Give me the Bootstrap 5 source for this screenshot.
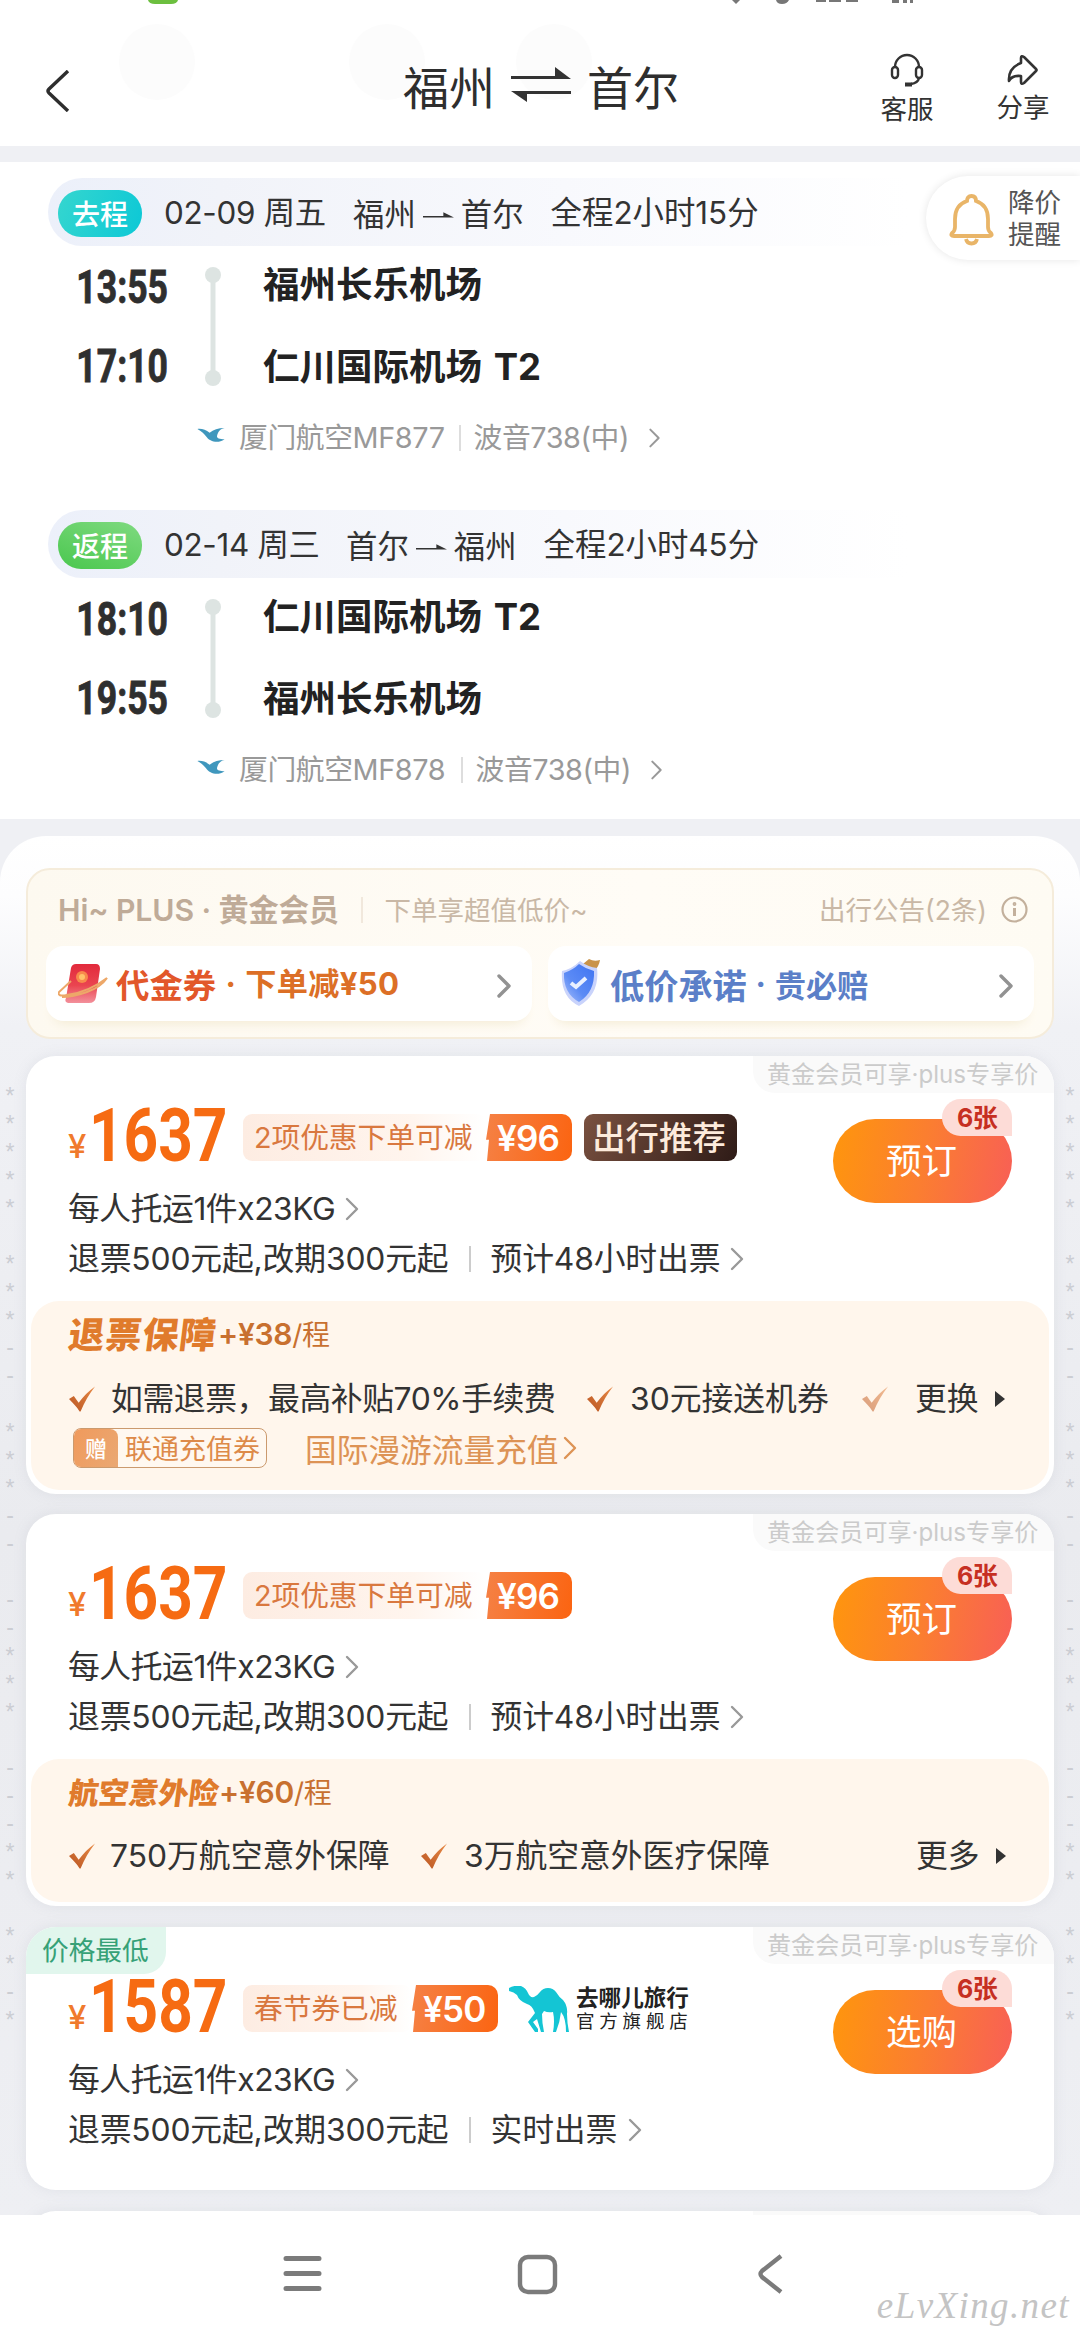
<!DOCTYPE html>
<html lang="zh-CN">
<head>
<meta charset="utf-8">
<meta name="viewport" content="width=device-width, initial-scale=1">
<title>福州 ⇌ 首尔</title>
<link href="https://cdn.jsdelivr.net/npm/bootstrap@5.3.0/dist/css/bootstrap.min.css" rel="stylesheet">
<style>
body{width:1080px;height:2339px;overflow:hidden;background:#eff0f4;font-family:Inter,"Noto Sans CJK SC",sans-serif;color:#333;font-size:32px;line-height:1;position:relative}
svg{display:block;flex:none}
span,div{white-space:nowrap}
.cn{font-family:"Noto Sans CJK SC",sans-serif}
.topbar{height:146px;padding:27px 30px 0 46px;position:relative;overflow:hidden}
.halo{position:absolute;top:24px;width:76px;height:76px;border-radius:50%;background:#fcfcfc}
.stat{position:absolute;top:0;left:0}
.ttl{font-size:46px;color:#2e2e2e;position:relative}
.tool{font-size:26.5px;line-height:30px;width:54px}
.trips{margin-top:16px;height:657px;padding:16px 0 0 48px}
.trip{height:331px}
.pillbar{width:860px;height:68px;border-radius:34px 0 0 34px;background:linear-gradient(90deg,#ecf0fa 0,#f1f3f9 20%,#f8f9fd 60%,#fff 100%);padding:2px 0 0 10px;font-size:31.4px;line-height:66px;color:#333}
.dirtag{width:84px;height:47px;border-radius:23px;color:#fff;font-size:28px;font-weight:500;line-height:46px;text-align:center;margin-right:22px}
.go{background:linear-gradient(110deg,#35d6cf,#0cc8d6)}
.back{background:linear-gradient(20deg,#4ac74e,#7fda80)}
.d1{width:189px;letter-spacing:-.3px}
.leg{height:137px;padding-top:21px}
.hm{width:120px;text-align:right;height:38px;line-height:40px;font-family:Roboto,sans-serif;font-weight:700;font-size:46.5px;transform:scaleX(.765);transform-origin:100% 50%;color:#2f2f2f;margin-bottom:41px;-webkit-text-stroke:.9px #2f2f2f}
.stn{font-size:36.5px;font-weight:700;line-height:37px;margin-bottom:45px;color:#222;margin-left:42px;word-spacing:3px}
.flt{font-size:28.8px;line-height:34px;color:#999;padding-left:149px;margin-top:38px;letter-spacing:-.4px}
.vr1{width:1.5px;background:#ddd;flex:none}
.bellp{position:absolute;right:0;top:176px;width:154px;height:84px;border-radius:42px 0 0 42px;background:#fff;box-shadow:0 0 8px rgba(0,0,0,.1);padding:0 0 0 23px;font-size:26.5px;line-height:32px;color:#555}
.panel{position:relative;margin-top:17px;height:1379px;border-radius:46px 46px 0 0;background:linear-gradient(180deg,#fff 0,#fdfdfe 60px,#f0f1f5 190px,#eaebef 700px,#eeeff3 100%);padding:32px 26px 0}
.dots{position:absolute;left:0;top:0}
.plus{height:171px;border:2px solid #f5ecdb;border-radius:24px;background:linear-gradient(90deg,#fdf9f0,#fffcf6 60%,#fefbf3);position:relative;color:#c9b8a6;font-size:26.5px}
.hi{height:56px;padding:23px 24px 0 30px;line-height:34px}
.hi b{font-size:30.2px;font-weight:600;color:#bfab98;letter-spacing:-.1px}
.cp{height:75px;border-radius:18px;background:#fff;width:486px;box-shadow:0 10px 12px -8px #f3ead2;line-height:72px;padding-right:21px}
.ct1{font-size:33.4px;font-weight:700}
.ct2{font-size:31.2px;font-weight:700}
.red{color:#e2572a}.org{color:#dc6f26}.blu{color:#5b7fc8}
.yuan50{letter-spacing:.3px}
.fare{position:relative;background:#fff;border-radius:30px;margin-top:21px;overflow:hidden;padding:48px 5px 0;box-shadow:0 0 14px rgba(130,140,160,.12)}
.f1{height:438px;margin-top:17px}.f2{height:392px;margin-top:20px}.f3{height:263px}
.plustag{position:absolute;top:0;right:0;width:301px;height:37px;background:#fafafa;border-radius:0 0 0 22px;font-size:24.1px;line-height:37px;padding-left:14px;color:#cbcbcb}
.low{position:absolute;top:0;left:0;width:140px;height:47px;background:#e1f6ed;border-radius:0 0 22px 0;color:#36a177;font-size:26.7px;line-height:44px;padding-left:16px}
.price{height:66px;padding:1px 0 0 38px}
.amt{width:174px;height:47px;color:#f66b12;font-weight:700;position:relative}
.yen{font-size:33px;font-weight:500;line-height:30px;width:25px;font-family:Inter;color:#f07a2c;padding-top:17px;text-indent:-1px}
.num{font-family:Roboto,sans-serif;font-size:74px;font-weight:700;line-height:43px;transform:scaleX(.815);transform-origin:0 50%;margin-left:3px}
.promo{height:47px;line-height:48px;border-radius:9px;background:linear-gradient(90deg,#fdece2,#fff5ee 70%,#fff);font-size:28.8px;color:#d9783f;padding-left:11px;width:243px;letter-spacing:-.1px}
.off{position:relative;width:86px;height:47px;border-radius:0 10px 10px 0;background:linear-gradient(100deg,#f58145,#fb6411);clip-path:polygon(4px 0,100% 0,100% 100%,1px 100%,3px 55%,0 55%);color:#fff;font-weight:600;font-size:35px;line-height:49px;padding-left:11px;letter-spacing:-.8px}
.rec{width:153px;height:47px;margin-left:12px;border-radius:9px;background:linear-gradient(120deg,#7a5140,#2e1b17);color:#fdebdc;font-size:33.4px;font-weight:500;line-height:44px;text-align:center;text-indent:-3px}
.info{padding-left:37px;height:51px;line-height:51px;font-size:31.8px}
.info span{letter-spacing:-.15px}
.info.up{margin-top:13px;margin-bottom:-1px}
.info.up span{letter-spacing:-.45px}
.buy{position:absolute;right:42px;top:63px;width:179px;height:84px;border-radius:42px;background:linear-gradient(100deg,#ff960c,#fb7e30 50%,#f85f56);color:#fff;font-size:35.5px;line-height:86px;text-align:center;text-indent:-2px;border:0;padding:0}
.left6{position:absolute;right:42px;top:43px;width:70px;height:37px;border-radius:19px 19px 0 19px;background:#fddcd7;color:#c62f22;font-weight:700;font-size:25px;line-height:38px;padding-left:15px;letter-spacing:-.5px}
.ins{border-radius:28px;background:#fff6ec;margin-top:17px;padding:9px 0 0 38px;position:relative}
.i1{height:189px}.i2{height:143px}
.it{height:49px;line-height:48px;color:#c8702f;font-weight:600;font-size:30px;letter-spacing:-.3px}
.it em{font-family:"Noto Sans CJK SC";font-weight:900;font-size:36px;line-height:44px;height:49px;color:#e07b2c;letter-spacing:1px;width:149px;transform:skewX(-7deg);font-style:normal}
.i2 .it em{font-size:30px;width:150px;letter-spacing:0;line-height:47px}
.it i{font-style:normal;font-weight:400;font-size:28px}
.perk{height:50px;line-height:50px;margin-top:15px;font-size:31.8px}
.perk .wide{letter-spacing:-.4px}
.i2 .perk{margin-top:14px}
.gift{height:40px;margin-top:4px;padding-left:4px;line-height:38px}
.gb{width:194px;height:40px;border:1.5px solid #cb9a6e;border-radius:8px;overflow:hidden;font-size:27px;line-height:37px;color:#dd8a49;background:#fff8f0}
.gb span:first-child{width:44px;background:linear-gradient(120deg,#f09a5c,#eaa873);color:#fff;font-size:22px;text-align:center;margin-right:7px;font-weight:500;border-radius:0 8px 0 0}
.sys{position:absolute;left:0;top:2215px;width:1080px;height:124px;background:#fff}
.sig{position:absolute;right:10px;top:67px;font-family:"Liberation Serif",serif;font-style:italic;font-size:37px;color:#c4c4c4;letter-spacing:1.4px;line-height:48px}
</style>
</head>
<body>
<svg width="0" height="0" class="position-absolute">
 <defs>
  <symbol id="chev" viewBox="0 0 14 24"><path d="M2 2l10 10L2 22" fill="none" stroke="currentColor" stroke-width="2.4" stroke-linecap="round" stroke-linejoin="round"/></symbol>
  <symbol id="chevb" viewBox="0 0 14 24"><path d="M2 2l10 10L2 22" fill="none" stroke="currentColor" stroke-width="3.4" stroke-linecap="round" stroke-linejoin="round"/></symbol>
  <symbol id="arr" viewBox="0 0 32 10"><path d="M0 6.500h32L21 1v4H0z" fill="#333"/></symbol>
  <symbol id="bird" viewBox="0 0 30 16"><path d="M0 1c5-.5 9 1 13 4 4-3 9-5 16-5-5 1-7 4-8 8-1 3 3 4 8 4-6 4-11 3-15 1-5-2-4-6-14-12z" fill="#3f97bd"/></symbol>
  <symbol id="tick" viewBox="0 0 28 26"><path d="M0 13l5-3 5 7C15 10 20 5 27 0 21 8 16 16 12 26h-1C8 21 4 17 0 13z" fill="url(#tg)"/></symbol>
  <linearGradient id="tg" x1="0" y1="1" x2="1" y2="0"><stop offset="0" stop-color="#b95522"/><stop offset="1" stop-color="#e88a46"/></linearGradient>
  <linearGradient id="rg" x1="0" y1="0" x2="0" y2="1"><stop offset="0" stop-color="#e22a3c"/><stop offset=".55" stop-color="#ea4550"/><stop offset="1" stop-color="#f3909b"/></linearGradient>
  <linearGradient id="sg" x1="1" y1="0" x2="0" y2="1"><stop offset="0" stop-color="#3f74f2"/><stop offset=".6" stop-color="#5c8bf5"/><stop offset="1" stop-color="#a9c0fb"/></linearGradient>
  <symbol id="line2" viewBox="0 0 16 120"><path d="M8 10v100" stroke="#dde4e2" stroke-width="5"/><circle cx="8" cy="8" r="8" fill="#dde4e2"/><circle cx="8" cy="111" r="8" fill="#dde4e2"/></symbol>
 </defs>
</svg>

<header class="topbar bg-white d-flex">
 <i class="halo" style="left:119px"></i><i class="halo" style="left:349px"></i><i class="halo" style="left:516px"></i>
 <svg class="stat" width="1080" height="8"><path d="M148 0h30q-1 4-7 4h-16q-6 0-7-4z" fill="#6cbf3f"/><g fill="#777"><path d="M732 0h8l-4 4zM776 0h13q-2 4-7 4t-6-4zM816 0h10v2h-10zM829 0h12v2h-12zM846 0h12v2h-12zM892 0h7v3h-7zM903 0h4v3h-4zM910 0h3v3h-3z"/></g></svg>
 <svg style="position:relative;margin-top:43px" width="24" height="42" viewBox="0 0 24 42"><path d="M22 1L3 19q-2 2 0 4l19 18" fill="none" stroke="#2e2e2e" stroke-width="3.4"/></svg>
 <div class="ttl d-flex align-items-center cn" style="margin-top:35px;height:46px;margin-left:333px">
  <span>福州</span>
  <svg class="mx-3" width="60" height="36" viewBox="0 0 60 36"><path d="M0 9h44V0l16 12H0zM60 27H16v8L0 24h60z" fill="#333"/></svg>
  <span>首尔</span>
 </div>
 <div class="d-flex cn ms-auto" style="gap:62px;padding-top:26px">
  <div class="tool d-flex flex-column align-items-center">
   <svg width="34" height="34" viewBox="0 0 34 34" fill="none" stroke="#333" stroke-width="2.4"><path d="M5 14a12 12 0 0 1 24 0"/><rect x="2" y="14" width="6" height="11" rx="3"/><rect x="26" y="14" width="6" height="11" rx="3"/><path d="M29 25q-1 5-8 6"/><path d="M15 31.500h7" stroke-width="4"/></svg>
   <span style="margin-top:6px">客服</span>
  </div>
  <div class="tool d-flex flex-column align-items-center">
   <svg width="34" height="34" viewBox="0 0 34 34" fill="none" stroke="#333" stroke-width="2.6" stroke-linejoin="round"><path d="M15 10V5q0-3 3-1l12 12q1 1 0 2L18 30q-3 2-3-1v-6q-9-1-12 5-1-13 12-18z"/></svg>
   <span style="margin-top:4px">分享</span>
  </div>
 </div>
</header>

<section class="trips bg-white">
 <div class="trip">
  <div class="pillbar d-flex align-items-center"><span class="dirtag go cn">去程</span><span class="d1">02-09 周五</span><span class="cn" style="line-height:64px">福州</span><svg style="margin:6px 7px 0" width="31" height="10"><use href="#arr"/></svg><span class="cn" style="line-height:64px">首尔</span><span style="margin-left:27px">全程2小时15分</span></div>
  <div class="leg d-flex">
   <div><div class="hm">13:55</div><div class="hm">17:10</div></div>
   <svg style="margin-left:37px" width="16" height="120"><use href="#line2"/></svg>
   <div><div class="stn">福州长乐机场</div><div class="stn">仁川国际机场 T2</div></div>
  </div>
  <div class="flt d-flex align-items-center"><svg style="margin:-6px 13px 0 0" width="29" height="15"><use href="#bird"/></svg><span style="width:220px">厦门航空MF877</span><i class="vr1" style="height:26px;margin-right:13px"></i><span style="width:174px">波音738(中)</span><svg width="13" height="20"><use href="#chev"/></svg></div>
 </div>
 <div class="trip" style="padding-top:1px">
  <div class="pillbar d-flex align-items-center"><span class="dirtag back cn">返程</span><span class="d1" style="width:182px">02-14 周三</span><span class="cn" style="line-height:64px">首尔</span><svg style="margin:6px 7px 0" width="31" height="10"><use href="#arr"/></svg><span class="cn" style="line-height:64px">福州</span><span style="margin-left:27px">全程2小时45分</span></div>
  <div class="leg d-flex">
   <div><div class="hm">18:10</div><div class="hm">19:55</div></div>
   <svg style="margin-left:37px" width="16" height="120"><use href="#line2"/></svg>
   <div><div class="stn">仁川国际机场 T2</div><div class="stn">福州长乐机场</div></div>
  </div>
  <div class="flt d-flex align-items-center"><svg style="margin:-6px 13px 0 0" width="29" height="15"><use href="#bird"/></svg><span style="width:222px">厦门航空MF878</span><i class="vr1" style="height:26px;margin-right:13px"></i><span style="width:174px">波音738(中)</span><svg width="13" height="20"><use href="#chev"/></svg></div>
 </div>
</section>
<aside class="bellp d-flex align-items-center cn">
 <svg style="margin-top:4px" width="45" height="52" viewBox="0 0 45 52" fill="none" stroke="#e9b568" stroke-width="3.8"><path d="M18 7q0-5 4.500-5t4.500 5q12 4 12 18v8q0 4 3 6 2 3-2 3H5q-4 0-2-3 3-2 3-6v-8Q6 11 18 7z"/><path d="M17 45q1 4.500 5.500 4.500T28 45"/></svg>
 <div style="margin-left:14px;margin-top:-3px">降价<br>提醒</div>
</aside>

<main class="panel">
 <svg class="dots" width="1080" height="1379"><g id="marks" font-family="Liberation Sans" font-size="23" fill="#cbcdd3" text-anchor="middle"></g></svg>
 <section class="plus">
  <div class="hi d-flex align-items-center"><b style="width:303px">Hi~ PLUS · 黄金会员</b><i class="vr1" style="height:26px;background:#f1e8dc;margin-right:22px"></i><span>下单享超值低价~</span><span class="ms-auto">出行公告(2条)</span><svg style="margin-left:14px" width="27" height="27" viewBox="0 0 27 27" fill="none" stroke="#c3b09c" stroke-width="2.200"><circle cx="13.500" cy="13.500" r="12"/><path d="M13.500 12v8" stroke-width="3"/><circle cx="13.500" cy="8" r=".8"/></svg></div>
  <div class="d-flex" style="gap:16px;padding:20px 0 0 18px">
   <div class="cp d-flex align-items-center">
    <svg style="margin-left:12px" width="50" height="42" viewBox="0 0 50 42"><path d="M18 1h20q4 0 4 5l-4 28q-1 6-7 6H10q-4-1-2-5L13 5q1-4 5-4z" fill="url(#rg)"/><path d="M13 18L1 29q-2 5 8 3 22-3 40-17-6 9-20 14T4 34" fill="none" stroke="#eda869" stroke-width="2"/><circle cx="24" cy="14" r="6" fill="#f8894b"/><circle cx="24" cy="14" r="3" fill="#ffc26a"/></svg>
    <span class="ct1 red cn" style="margin-left:8px">代金券</span><span class="ct2 org" style="width:29px;text-align:center">·</span><span class="ct2 org yuan50">下单减¥50</span><svg class="ms-auto" style="color:#929292;margin-top:4px" width="14" height="24"><use href="#chevb"/></svg></div>
   <div class="cp d-flex align-items-center">
    <svg style="margin-left:13px;margin-top:-2px" width="40" height="48" viewBox="0 0 40 48"><path d="M22 5l6-5q5 3 11 1-1 6-5 10z" fill="#c99349"/><path d="M19 2q8 6 17 7 3 26-18 38Q-1 38 1 12q10-2 18-10z" fill="#c9d3fb"/><path d="M18 5q7 5 15 7 1 21-15 31Q2 34 3 14q9-3 15-9z" fill="url(#sg)"/><path d="M10 24l5 4 10-9" fill="none" stroke="#e9f0ff" stroke-width="4"/></svg>
    <span class="ct1 blu cn" style="margin-left:9px;font-size:34.200px">低价承诺</span><span class="ct2 blu" style="width:28px;text-align:center">·</span><span class="ct2 blu cn">贵必赔</span><svg class="ms-auto" style="color:#929292;margin-top:4px" width="14" height="24"><use href="#chevb"/></svg></div>
  </div>
 </section>

 <article class="fare f1">
  <div class="plustag">黄金会员可享·plus专享价</div>
  <div class="price d-flex align-items-center"><div class="amt d-flex"><span class="yen">¥</span><span class="num">1637</span></div><div class="promo">2项优惠下单可减</div><div class="off">¥96</div><div class="rec cn">出行推荐</div></div>
  <button class="buy">预订</button><div class="left6">6张</div>
  <div class="info up d-flex align-items-center"><span style="width:277px">每人托运1件x23KG</span><svg width="14" height="24" style="color:#999"><use href="#chev"/></svg></div>
  <div class="info d-flex align-items-center"><span style="width:401px">退票500元起,改期300元起</span><i class="vr1" style="height:26px;background:#ccc;margin-right:20px"></i><span style="width:239px">预计48小时出票</span><svg width="14" height="24" style="color:#999"><use href="#chev"/></svg></div>
  <div class="ins i1">
   <div class="it d-flex align-items-center"><em>退票保障</em><span>+¥38<i>/程</i></span></div>
   <div class="perk d-flex align-items-center"><svg width="27" height="26"><use href="#tick"/></svg><span class="wide" style="margin-left:15px;width:476px">如需退票，最高补贴70%手续费</span><svg width="27" height="26"><use href="#tick"/></svg><span style="margin-left:16px;width:232px">30元接送机券</span><svg width="27" height="26" opacity=".55"><use href="#tick"/></svg><span style="margin-left:26px;width:80px">更换</span><svg width="10" height="16"><path d="M0 0l10 8-10 8z" fill="#333"/></svg></div>
   <div class="gift d-flex align-items-center"><div class="gb d-flex cn"><span>赠</span><span>联通充值券</span></div><span class="cn" style="color:#dd9355;margin-left:38px;font-size:31.700px">国际漫游流量充值</span><svg width="14" height="24" style="color:#dd9355;margin-left:4px"><use href="#chev"/></svg></div>
  </div>
 </article>

 <article class="fare f2">
  <div class="plustag">黄金会员可享·plus专享价</div>
  <div class="price d-flex align-items-center"><div class="amt d-flex"><span class="yen">¥</span><span class="num">1637</span></div><div class="promo">2项优惠下单可减</div><div class="off">¥96</div></div>
  <button class="buy">预订</button><div class="left6">6张</div>
  <div class="info up d-flex align-items-center"><span style="width:277px">每人托运1件x23KG</span><svg width="14" height="24" style="color:#999"><use href="#chev"/></svg></div>
  <div class="info d-flex align-items-center"><span style="width:401px">退票500元起,改期300元起</span><i class="vr1" style="height:26px;background:#ccc;margin-right:20px"></i><span style="width:239px">预计48小时出票</span><svg width="14" height="24" style="color:#999"><use href="#chev"/></svg></div>
  <div class="ins i2">
   <div class="it d-flex align-items-center"><em>航空意外险</em><span>+¥60<i>/程</i></span></div>
   <div class="perk d-flex align-items-center"><svg width="27" height="26"><use href="#tick"/></svg><span style="margin-left:14px;width:311px">750万航空意外保障</span><svg width="27" height="26"><use href="#tick"/></svg><span style="margin-left:16px;width:452px">3万航空意外医疗保障</span><span style="width:80px">更多</span><svg width="10" height="16"><path d="M0 0l10 8-10 8z" fill="#333"/></svg></div>
  </div>
 </article>

 <article class="fare f3">
  <div class="plustag">黄金会员可享·plus专享价</div><div class="low cn">价格最低</div>
  <div class="price d-flex align-items-center"><div class="amt d-flex"><span class="yen">¥</span><span class="num">1587</span></div><div class="promo cn" style="width:169px;line-height:44px">春节券已减</div><div class="off">¥50</div>
   <svg style="margin-left:11px" width="61" height="46" viewBox="0 0 61 46"><path d="M0 2Q5-1 12 0q5 2 7 7 2 5 6 4 3-1 6-5 3-4 8-4 5 0 8 4 3 5 7 8 5 6 4 14 0 8 2 18h-3q0-14-5-20-1 10-5 20h-3q2-11 0-20-5 1-9-1l-2 3q0 9 2 18h-3l-4-13-4 3 5 7v3h-3l-7-10 7-9q-3-8-8-9-8-3-10-9-3-3-8-4z" fill="#14c5d4"/></svg>
   <div class="cn" style="margin-left:6px;margin-top:-2px;color:#222"><div style="font-size:22.600px;font-weight:700;line-height:25px">去哪儿旅行</div><div style="font-size:18.500px;letter-spacing:4.800px;line-height:23px">官方旗舰店</div></div></div>
  <button class="buy">选购</button><div class="left6">6张</div>
  <div class="info up d-flex align-items-center"><span style="width:277px">每人托运1件x23KG</span><svg width="14" height="24" style="color:#999"><use href="#chev"/></svg></div>
  <div class="info d-flex align-items-center"><span style="width:401px">退票500元起,改期300元起</span><i class="vr1" style="height:26px;background:#ccc;margin-right:20px"></i><span style="width:137px">实时出票</span><svg width="14" height="24" style="color:#999"><use href="#chev"/></svg></div>
 </article>
 <article class="fare" style="height:120px"><div class="plustag"></div></article>
</main>

<nav class="sys">
 <svg width="1080" height="124" fill="none" stroke="#7b7b7b" stroke-width="4.400"><path d="M286 43.500h33M286 58.500h33M286 73.500h33" stroke-width="5" stroke-linecap="round"/><rect x="520" y="42" width="35" height="35" rx="8"/><path d="M781 41L762 56q-3 3 0 6l19 15"/></svg>
 <div class="sig">eLvXing.net</div>
</nav>
<script>
// Side watermark column, mirrored on both edges of the fare list.
var rows={"*":[1092,1120,1148,1176,1204,1260,1288,1316,1428,1456,1484,1652,1680,1708,1848,1876,1932,1960,2016],
"-":[1348,1376,1516,1544,1600,1628,1768,1796,1824,1992]},out="";
Object.keys(rows).forEach(function(c){rows[c].forEach(function(y){[10,1070].forEach(function(x){
out+='<text x="'+x+'" y="'+(y-836+(c=="*"?12:7))+'">'+c+'</text>';});});});
document.getElementById("marks").innerHTML=out;
</script>
<script src="https://cdn.jsdelivr.net/npm/bootstrap@5.3.0/dist/js/bootstrap.bundle.min.js"></script>
</body>
</html>
